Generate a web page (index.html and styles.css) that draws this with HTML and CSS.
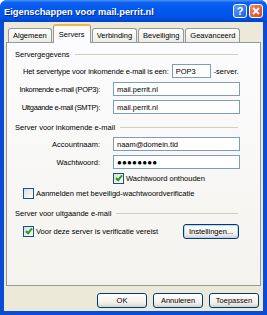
FILE: index.html
```html
<!DOCTYPE html>
<html>

<head>
  <meta charset="utf-8">
  <meta name="viewport" content="width=device-width">
  <title>Eigenschappen voor mail.perrit.nl</title>
  <link rel="stylesheet" href="styles.css">
</head>

<body>

  <div class="window">
    <div class="titlebar">
      <span class="title">Eigenschappen voor mail.perrit.nl</span>
      <span class="cap-btn help">?</span>
      <span class="cap-btn close">
        <svg width="8" height="8" viewBox="0 0 8 8"><path d="M1 1 L7 7 M7 1 L1 7" stroke="#fff" stroke-width="1.8" /></svg>
      </span>
    </div>

    <div class="client">
      <div class="tabs">
        <span class="tab">Algemeen</span>
        <span class="tab active">Servers</span>
        <span class="tab">Verbinding</span>
        <span class="tab">Beveiliging</span>
        <span class="tab">Geavanceerd</span>
      </div>

      <div class="panel">
        <!-- Servergegevens -->
        <div class="group-title"><span>Servergegevens</span></div>
        <div class="row first">
          <span class="narrow">Het servertype voor inkomende e-mail is een:</span>
          <span class="field small">POP3</span>
          <span>-server.</span>
        </div>
        <div class="row grid">
          <label class="narrower">Inkomende e-mail (POP3):</label>
          <span class="field">mail.perrit.nl</span>
        </div>
        <div class="row grid tight">
          <label class="narrower">Uitgaande e-mail (SMTP):</label>
          <span class="field">mail.perrit.nl</span>
        </div>

        <!-- Inkomend -->
        <div class="group-title second"><span>Server voor inkomende e-mail</span></div>
        <div class="row grid mid">
          <label>Accountnaam:</label>
          <span class="field">naam@domein.tld</span>
        </div>
        <div class="row grid tight">
          <label>Wachtwoord:</label>
          <span class="field password">&#9679;&#9679;&#9679;&#9679;&#9679;&#9679;&#9679;&#9679;</span>
        </div>
        <div class="check-row indent">
          <span class="checkbox checked"></span>
          <span>Wachtwoord onthouden</span>
        </div>
        <div class="check-row">
          <span class="checkbox"></span>
          <span>Aanmelden met beveiligd-wachtwoordverificatie</span>
        </div>

        <!-- Uitgaand -->
        <div class="group-title third"><span>Server voor uitgaande e-mail</span></div>
        <div class="check-row last">
          <span class="checkbox checked"></span>
          <span>Voor deze server is verificatie vereist</span>
          <button class="btn settings">Instellingen...</button>
        </div>
      </div>

      <div class="buttons">
        <button class="btn">OK</button>
        <button class="btn">Annuleren</button>
        <button class="btn">Toepassen</button>
      </div>
    </div>
  </div>

</body>

</html>
```

FILE: styles.css
```css
body {
  margin: 0;
  font-family: 'Liberation Sans', Arial, sans-serif;
  font-size: 7.5px;
  color: #000000;
  background: #ffffff;
  white-space: nowrap;
}

.window {
  width: 267px;
  height: 315px;
  display: flex;
  flex-direction: column;
  background: #0a4cd6;
  border-radius: 7px 7px 0 0;
  overflow: hidden;
}

.titlebar {
  height: 22px;
  flex: none;
  display: flex;
  align-items: center;
  padding: 0 4px 0 4px;
  background: linear-gradient(to bottom, #4a95f8 0%, #0d5fee 12%, #0058ee 45%, #0053e6 80%, #0043c8 100%);
}

.title {
  flex: 1;
  color: #ffffff;
  font-weight: bold;
  font-size: 9.3px;
  text-shadow: 1px 1px 0 #0a2a8a;
  padding-top: 1px;
}

.cap-btn {
  width: 12px;
  height: 12px;
  border: 1px solid #ffffff;
  border-radius: 3px;
  display: flex;
  align-items: center;
  justify-content: center;
  color: #ffffff;
  font-weight: bold;
  font-size: 11px;
}

.help {
  background: linear-gradient(to bottom right, #5e9bfa, #1f5fe0);
  margin-right: 2px;
}

.close {
  background: linear-gradient(to bottom right, #f08a62, #d9451c);
}

.client {
  flex: 1;
  margin: 0 4px 4px 4px;
  background: #ece9d8;
  display: flex;
  flex-direction: column;
}

.tabs {
  display: flex;
  align-items: flex-end;
  height: 18px;
  padding: 0 0 0 4px;
  margin-top: 2px;
  position: relative;
  z-index: 1;
}

.tab {
  height: 13px;
  padding: 0 4px;
  border: 1px solid #919b9c;
  border-bottom: none;
  border-radius: 3px 3px 0 0;
  background: linear-gradient(to bottom, #ffffff, #ecebe6);
  display: flex;
  align-items: center;
  margin-right: 1px;
}

.tab.active {
  height: 17px;
  margin-bottom: -1px;
  background: #fcfcfe;
  border-top: 2px solid #f7b43c;
  padding: 0 5px;
}

.panel {
  margin: 0 2px;
  height: 244px;
  box-sizing: border-box;
  border: 1px solid #919b9c;
  background: linear-gradient(to bottom, #fcfcfe, #f4f3ee);
  padding: 6px 20px 0 8px;
}

.group-title {
  height: 10px;
  display: flex;
  align-items: center;
  margin-right: 2px;
}

.group-title::after {
  content: "";
  flex: 1;
  height: 1px;
  background: #d0d0bf;
  margin-left: 5px;
}

.group-title.second {
  margin-top: 8px;
}

.group-title.third {
  margin-top: 9px;
}

.row {
  height: 14px;
  display: flex;
  align-items: center;
  margin-top: 4px;
  padding-left: 8px;
}

.row.first {
  margin-top: 5px;
}

.row.mid {
  margin-top: 5px;
}

.row.grid {
  display: grid;
  grid-template-columns: 85px 1fr;
  column-gap: 5px;
  padding-left: 0;
}

.row.grid label {
  text-align: right;
  width: 93px;
  justify-self: end;
  margin-left: -8px;
}

.narrow {
  letter-spacing: -0.12px;
}

.narrower {
  letter-spacing: -0.35px;
}

.field {
  height: 14px;
  box-sizing: border-box;
  border: 1px solid #7f9db9;
  background: #ffffff;
  display: flex;
  align-items: center;
  padding-left: 3px;
}

.row.grid .field {
  margin-left: 8px;
}

.field.small {
  width: 39px;
  margin: 0 3px;
}

.field.password {
  font-size: 8px;
  letter-spacing: 0.2px;
}

.check-row {
  height: 12px;
  display: flex;
  align-items: center;
  margin-top: 3px;
  padding-left: 8px;
}

.check-row.indent {
  padding-left: 98px;
  margin-top: 3px;
}

.check-row.last {
  height: 16px;
  margin-top: 5px;
}

.checkbox {
  width: 9px;
  height: 9px;
  border: 1px solid #1c5180;
  background: linear-gradient(to bottom right, #dcdcd7, #ffffff);
  margin-right: 2px;
  flex: none;
  position: relative;
}

.checkbox.checked::after {
  content: "";
  position: absolute;
  left: 3px;
  top: 0px;
  width: 2px;
  height: 5px;
  border: solid #21a121;
  border-width: 0 2px 2px 0;
  transform: rotate(40deg);
}

.btn {
  font-family: inherit;
  font-size: 7.5px;
  height: 15px;
  width: 50px;
  padding: 0;
  border: 1px solid #003c74;
  border-radius: 3px;
  background: linear-gradient(to bottom, #ffffff, #f0f0ea 70%, #d6d0c5);
  color: #000000;
}

.btn.settings {
  width: 56px;
  margin-left: auto;
  margin-right: 1px;
  box-shadow: inset 0 0 0 1px #bcd4f6;
}

.buttons {
  display: flex;
  justify-content: flex-end;
  gap: 6px;
  padding: 7px 4px 0 0;
}
```
